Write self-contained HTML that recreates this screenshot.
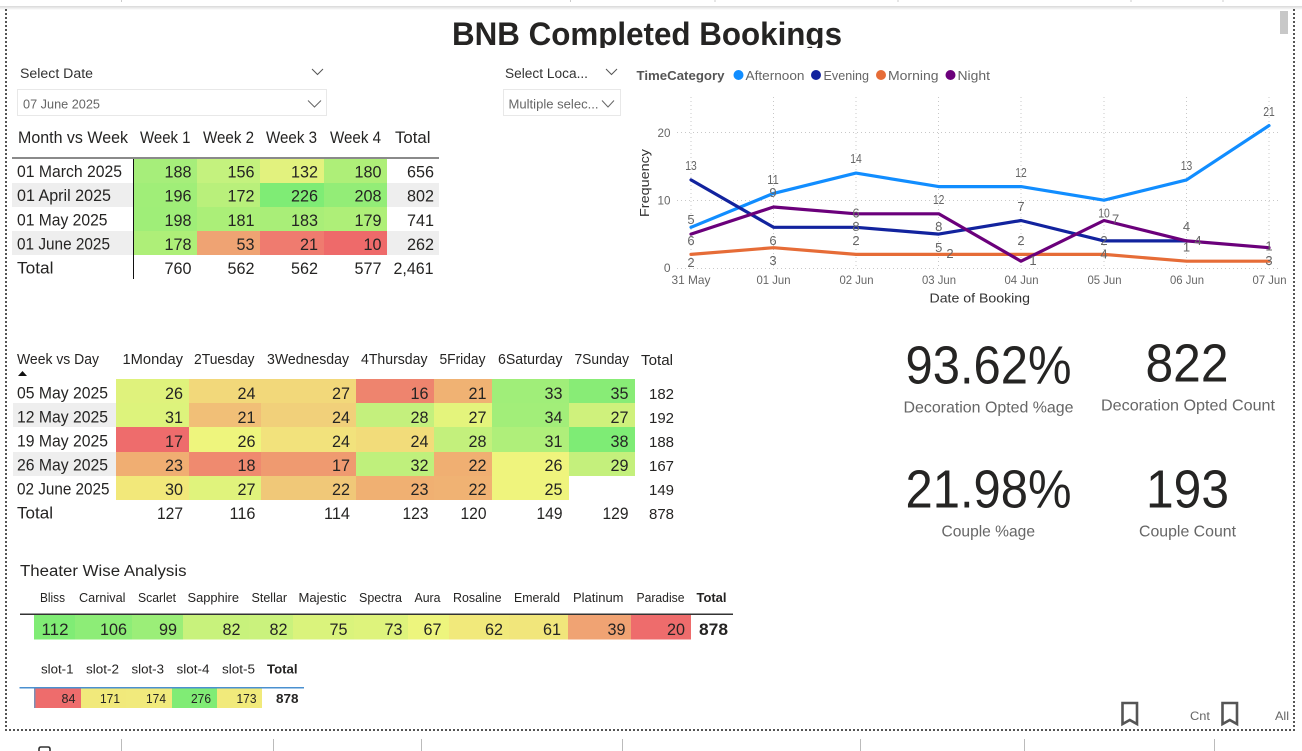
<!DOCTYPE html>
<html lang="en"><head><meta charset="utf-8"><title>BNB Completed Bookings</title>
<style>
html,body{margin:0;padding:0;width:1302px;height:751px;overflow:hidden;background:#fff}
svg{position:absolute;left:0;top:0;display:block}
text{font-family:"Liberation Sans",sans-serif;fill:#252423;white-space:pre}
.t1{font-size:17px}.t2{font-size:16.5px}.h2{font-size:15px}.h3{font-size:12.5px}.s{font-size:12.5px}
.r text{text-anchor:end}
.l text{font-size:13px;fill:#666;text-anchor:middle}
.a text{font-size:12px;fill:#666}
.kpi{font-size:54px}.cap{font-size:16px;fill:#666}
rect{shape-rendering:crispEdges}
</style></head><body>
<svg width="1302" height="751" viewBox="0 0 1302 751" xmlns="http://www.w3.org/2000/svg">
<defs><linearGradient id="sh" x1="0" y1="0" x2="0" y2="1"><stop offset="0" stop-color="#d8d8d8"/><stop offset="1" stop-color="#fff"/></linearGradient></defs>
<rect x="0" y="6" width="1302" height="4" fill="url(#sh)"/>
<g stroke="#ccc"><path d="M121.5 0V2M570.5 0V2M715 0V2M898 0V2M1131 0V2M1223 0V2"/></g>
<g stroke="#bbb"><path d="M121.5 739V751M273.5 739V751M421.5 739V751M622.5 739V751M860.5 739V751M1024.5 739V751M1214.5 739V751"/></g>
<path d="M6 9V730H1294V9" fill="none" stroke="#555" stroke-width="2" stroke-dasharray="2 2"/>
<rect x="1280" y="11" width="8" height="23" fill="#c8c8c8"/>
<path d="M39 751V749Q39 747 41 747H48Q50 747 50 749V751" fill="none" stroke="#333" stroke-width="1.6"/>

<text x="452" y="45" font-size="32" font-weight="700" textLength="390" lengthAdjust="spacingAndGlyphs">BNB Completed Bookings</text>
<rect x="440" y="48" width="420" height="6" fill="#fff"/>

<!-- slicers -->
<text x="20" y="78" font-size="13.5" fill="#444" textLength="73" lengthAdjust="spacingAndGlyphs" style="fill:#333">Select Date</text>
<path d="M312 69L317.5 74.5L323 69" fill="none" stroke="#555" stroke-width="1"/>
<rect x="17.5" y="89.5" width="309" height="26" fill="#fff" stroke="#e8e8e8"/>
<text x="23" y="108.5" font-size="12.5" textLength="77" lengthAdjust="spacingAndGlyphs" style="fill:#666">07 June 2025</text>
<path d="M308 100.5L314.5 107L321 100.5" fill="none" stroke="#666" stroke-width="1"/>
<text x="505" y="78" font-size="13.5" textLength="83" lengthAdjust="spacingAndGlyphs" style="fill:#333">Select Loca...</text>
<path d="M606 69L611.5 74.5L617 69" fill="none" stroke="#555" stroke-width="1"/>
<rect x="503.5" y="89.5" width="117" height="26" fill="#fff" stroke="#e8e8e8"/>
<text x="508.5" y="108.5" font-size="12.5" textLength="90" lengthAdjust="spacingAndGlyphs" style="fill:#666">Multiple selec...</text>
<path d="M602 100.5L608 107L614 100.5" fill="none" stroke="#666" stroke-width="1"/>

<!-- Table 1 -->
<g class="t1">
<text x="18" y="143" textLength="110" lengthAdjust="spacingAndGlyphs">Month vs Week</text>
<text x="140" y="143" textLength="50.5" lengthAdjust="spacingAndGlyphs">Week 1</text>
<text x="203" y="143" textLength="51" lengthAdjust="spacingAndGlyphs">Week 2</text>
<text x="266" y="143" textLength="51" lengthAdjust="spacingAndGlyphs">Week 3</text>
<text x="330" y="143" textLength="51" lengthAdjust="spacingAndGlyphs">Week 4</text>
<text x="395" y="143" textLength="35.5" lengthAdjust="spacingAndGlyphs">Total</text>
</g>
<rect x="12" y="183" width="427" height="24" fill="#eeeeee"/>
<rect x="12" y="231" width="427" height="24" fill="#eeeeee"/>
<g>
<rect x="134" y="158" width="63" height="25" fill="#A6EE7A"/><rect x="197" y="158" width="63" height="25" fill="#C4F27E"/><rect x="260" y="158" width="64" height="25" fill="#E2F27E"/><rect x="324" y="158" width="63" height="25" fill="#AEEF78"/>
<rect x="134" y="183" width="63" height="24" fill="#A0EE78"/><rect x="197" y="183" width="63" height="24" fill="#B9F07B"/><rect x="260" y="183" width="64" height="24" fill="#7FEC75"/><rect x="324" y="183" width="63" height="24" fill="#93ED77"/>
<rect x="134" y="207" width="63" height="24" fill="#9FEE78"/><rect x="197" y="207" width="63" height="24" fill="#ABEF78"/><rect x="260" y="207" width="64" height="24" fill="#A9EE78"/><rect x="324" y="207" width="63" height="24" fill="#AEEF78"/>
<rect x="134" y="231" width="63" height="24" fill="#AEEF78"/><rect x="197" y="231" width="63" height="24" fill="#EFA373"/><rect x="260" y="231" width="64" height="24" fill="#EF7B6F"/><rect x="324" y="231" width="63" height="24" fill="#EE6A6A"/>
</g>
<rect x="12" y="157" width="427" height="2" fill="#8a8a8a"/>
<rect x="133" y="159" width="1" height="120" fill="#111"/>
<g class="t1" transform="translate(0,-1)">
<text x="17" y="178" textLength="105" lengthAdjust="spacingAndGlyphs">01 March 2025</text>
<text x="17" y="202" textLength="94" lengthAdjust="spacingAndGlyphs">01 April 2025</text>
<text x="17" y="226.5" textLength="90.5" lengthAdjust="spacingAndGlyphs">01 May 2025</text>
<text x="17" y="250.5" textLength="93" lengthAdjust="spacingAndGlyphs">01 June 2025</text>
<text x="17" y="274.5" textLength="36.5" lengthAdjust="spacingAndGlyphs">Total</text>
</g>
<g class="t1 r" transform="translate(0,-0.5)">
<text x="191.5" y="178" textLength="27" lengthAdjust="spacingAndGlyphs">188</text><text x="254.5" y="178" textLength="27" lengthAdjust="spacingAndGlyphs">156</text><text x="318" y="178" textLength="27" lengthAdjust="spacingAndGlyphs">132</text><text x="381.5" y="178" textLength="27" lengthAdjust="spacingAndGlyphs">180</text><text x="434" y="178" textLength="27" lengthAdjust="spacingAndGlyphs">656</text>
<text x="191.5" y="202" textLength="27" lengthAdjust="spacingAndGlyphs">196</text><text x="254.5" y="202" textLength="27" lengthAdjust="spacingAndGlyphs">172</text><text x="318" y="202" textLength="27" lengthAdjust="spacingAndGlyphs">226</text><text x="381.5" y="202" textLength="27" lengthAdjust="spacingAndGlyphs">208</text><text x="434" y="202" textLength="27" lengthAdjust="spacingAndGlyphs">802</text>
<text x="191.5" y="226.5" textLength="27" lengthAdjust="spacingAndGlyphs">198</text><text x="254.5" y="226.5" textLength="27" lengthAdjust="spacingAndGlyphs">181</text><text x="318" y="226.5" textLength="27" lengthAdjust="spacingAndGlyphs">183</text><text x="381.5" y="226.5" textLength="27" lengthAdjust="spacingAndGlyphs">179</text><text x="434" y="226.5" textLength="27" lengthAdjust="spacingAndGlyphs">741</text>
<text x="191.5" y="250.5" textLength="27" lengthAdjust="spacingAndGlyphs">178</text><text x="254.5" y="250.5" textLength="18" lengthAdjust="spacingAndGlyphs">53</text><text x="318" y="250.5" textLength="18" lengthAdjust="spacingAndGlyphs">21</text><text x="381.5" y="250.5" textLength="18" lengthAdjust="spacingAndGlyphs">10</text><text x="434" y="250.5" textLength="27" lengthAdjust="spacingAndGlyphs">262</text>
<text x="191.5" y="274.5" textLength="27" lengthAdjust="spacingAndGlyphs">760</text><text x="254.5" y="274.5" textLength="27" lengthAdjust="spacingAndGlyphs">562</text><text x="318" y="274.5" textLength="27" lengthAdjust="spacingAndGlyphs">562</text><text x="381.5" y="274.5" textLength="27" lengthAdjust="spacingAndGlyphs">577</text><text x="433.5" y="274.5" textLength="40" lengthAdjust="spacingAndGlyphs">2,461</text>
</g>

<!-- Chart -->
<text x="636.5" y="80" font-size="12.5" font-weight="700" textLength="88" lengthAdjust="spacingAndGlyphs" style="fill:#555">TimeCategory</text>
<circle cx="738.5" cy="75" r="5" fill="#118DFF"/><text x="745.5" y="80" font-size="12.5" textLength="59" lengthAdjust="spacingAndGlyphs" style="fill:#666">Afternoon</text>
<circle cx="816" cy="75" r="5" fill="#12239E"/><text x="823.5" y="80" font-size="12.5" textLength="45.5" lengthAdjust="spacingAndGlyphs" style="fill:#666">Evening</text>
<circle cx="881" cy="75" r="5" fill="#E66C37"/><text x="888" y="80" font-size="12.5" textLength="50.5" lengthAdjust="spacingAndGlyphs" style="fill:#666">Morning</text>
<circle cx="950.5" cy="75" r="5" fill="#6B007B"/><text x="957.5" y="80" font-size="12.5" textLength="32.5" lengthAdjust="spacingAndGlyphs" style="fill:#666">Night</text>
<g stroke="#c8c8c8" stroke-width="1" stroke-dasharray="1 3" fill="none">
<path d="M677 132.5H1279M677 200.5H1279M677 268.5H1279"/>
<path d="M691 97V268M773.5 97V268M856 97V268M938.5 97V268M1021 97V268M1104 97V268M1186.5 97V268M1269 97V268"/>
</g>
<g fill="none" stroke-width="3.2" stroke-linejoin="round" stroke-linecap="round">
<polyline stroke="#118DFF" points="691,227.3 773.5,193.4 856,173.1 938.7,186.6 1021,186.6 1104,200.2 1186.5,179.9 1269,125.6"/>
<polyline stroke="#12239E" points="691,179.9 773.5,227.3 856,227.3 938.7,234.1 1021,220.5 1104,240.9 1186.5,240.9"/>
<polyline stroke="#E66C37" points="691,254.4 773.5,247.7 856,254.4 938.7,254.4 1021,254.4 1104,254.4 1186.5,261.2 1269,261.2"/>
<polyline stroke="#6B007B" points="691,234.1 773.5,207 856,213.8 938.7,213.8 1021,261.2 1104,220.5 1186.5,240.9 1269,247.7"/>
</g>
<g class="l">
<text x="691" y="170" textLength="11.5" lengthAdjust="spacingAndGlyphs">13</text><text x="773" y="184" textLength="11.5" lengthAdjust="spacingAndGlyphs">11</text><text x="856" y="163" textLength="11.5" lengthAdjust="spacingAndGlyphs">14</text><text x="938.7" y="204" textLength="11.5" lengthAdjust="spacingAndGlyphs">12</text><text x="1021" y="177" textLength="11.5" lengthAdjust="spacingAndGlyphs">12</text><text x="1104" y="217.6" textLength="11.5" lengthAdjust="spacingAndGlyphs">10</text><text x="1186.5" y="170" textLength="11.5" lengthAdjust="spacingAndGlyphs">13</text><text x="1269" y="116" textLength="11.5" lengthAdjust="spacingAndGlyphs">21</text>
<text x="691" y="224">5</text><text x="773" y="197">9</text><text x="856" y="217.6">6</text><text x="938.7" y="231">8</text><text x="1021" y="211">7</text><text x="1115.6" y="223.6">7</text><text x="1186.5" y="231">4</text><text x="1198" y="245">4</text>
<text x="691" y="245">6</text><text x="773" y="245">6</text><text x="856" y="231">8</text><text x="938.7" y="252">5</text><text x="1021" y="245">2</text><text x="1104" y="245">2</text><text x="1186.5" y="251.6">1</text><text x="1269" y="250.3">1</text>
<text x="691" y="267">2</text><text x="773" y="265">3</text><text x="856" y="245">2</text><text x="950" y="258">2</text><text x="1033" y="265">1</text><text x="1104" y="258.6">4</text><text x="1269" y="265">3</text>
</g>
<g class="a">
<text x="670.5" y="137" text-anchor="end" textLength="13" lengthAdjust="spacingAndGlyphs">20</text>
<text x="670.5" y="204.5" text-anchor="end" textLength="13" lengthAdjust="spacingAndGlyphs">10</text>
<text x="670.5" y="272" text-anchor="end">0</text>
<text x="671.5" y="284" textLength="39" lengthAdjust="spacingAndGlyphs">31 May</text>
<text x="756.5" y="284" textLength="34" lengthAdjust="spacingAndGlyphs">01 Jun</text>
<text x="839.5" y="284" textLength="34" lengthAdjust="spacingAndGlyphs">02 Jun</text>
<text x="922" y="284" textLength="34" lengthAdjust="spacingAndGlyphs">03 Jun</text>
<text x="1004.5" y="284" textLength="34" lengthAdjust="spacingAndGlyphs">04 Jun</text>
<text x="1087.5" y="284" textLength="34" lengthAdjust="spacingAndGlyphs">05 Jun</text>
<text x="1170" y="284" textLength="34" lengthAdjust="spacingAndGlyphs">06 Jun</text>
<text x="1252.5" y="284" textLength="34" lengthAdjust="spacingAndGlyphs">07 Jun</text>
</g>
<text x="929.5" y="302.5" font-size="12.5" textLength="100.5" lengthAdjust="spacingAndGlyphs" style="fill:#333">Date of Booking</text>
<text transform="translate(649,217) rotate(-90)" font-size="12.5" textLength="68" lengthAdjust="spacingAndGlyphs" style="fill:#333">Frequency</text>

<!-- Table 2 -->
<g class="h2">
<text x="17" y="364" textLength="82" lengthAdjust="spacingAndGlyphs">Week vs Day</text>
<text x="122.5" y="364" textLength="60.5" lengthAdjust="spacingAndGlyphs">1Monday</text>
<text x="194" y="364" textLength="60.5" lengthAdjust="spacingAndGlyphs">2Tuesday</text>
<text x="267" y="364" textLength="82" lengthAdjust="spacingAndGlyphs">3Wednesday</text>
<text x="361" y="364" textLength="66.5" lengthAdjust="spacingAndGlyphs">4Thursday</text>
<text x="439.5" y="364" textLength="46" lengthAdjust="spacingAndGlyphs">5Friday</text>
<text x="498" y="364" textLength="64.5" lengthAdjust="spacingAndGlyphs">6Saturday</text>
<text x="574.5" y="364" textLength="54.5" lengthAdjust="spacingAndGlyphs">7Sunday</text>
<text x="641" y="365" textLength="32" lengthAdjust="spacingAndGlyphs">Total</text>
</g>
<path d="M18 376L22.5 371L27 376Z" fill="#111"/>
<rect x="13" y="403" width="104" height="24" fill="#eeeeee"/>
<rect x="13" y="452" width="104" height="24" fill="#eeeeee"/>
<g>
<rect x="116" y="379" width="73" height="24" fill="#DFF27C"/><rect x="189" y="379" width="167" height="24" fill="#F2D87A"/><rect x="356" y="379" width="78" height="24" fill="#EE846E"/><rect x="434" y="379" width="58" height="24" fill="#F0B273"/><rect x="492" y="379" width="77" height="24" fill="#A0EE79"/><rect x="569" y="379" width="66" height="24" fill="#88EC76"/>
<rect x="116" y="403" width="73" height="24" fill="#DDF37C"/><rect x="189" y="403" width="72" height="24" fill="#F1BF77"/><rect x="261" y="403" width="95" height="24" fill="#F1D07A"/><rect x="356" y="403" width="78" height="24" fill="#C4F07D"/><rect x="434" y="403" width="58" height="24" fill="#E4F47C"/><rect x="492" y="403" width="77" height="24" fill="#A2EE79"/><rect x="569" y="403" width="66" height="24" fill="#CFF17C"/>
<rect x="116" y="427" width="73" height="25" fill="#EE6C6C"/><rect x="189" y="427" width="72" height="25" fill="#EEF57D"/><rect x="261" y="427" width="95" height="25" fill="#F2E27C"/><rect x="356" y="427" width="78" height="25" fill="#F2DC7A"/><rect x="434" y="427" width="58" height="25" fill="#C3F07C"/><rect x="492" y="427" width="77" height="25" fill="#AFEF7A"/><rect x="569" y="427" width="66" height="25" fill="#7EEC75"/>
<rect x="116" y="452" width="73" height="24" fill="#F0AE72"/><rect x="189" y="452" width="72" height="24" fill="#EF8A6F"/><rect x="261" y="452" width="95" height="24" fill="#EF9A70"/><rect x="356" y="452" width="78" height="24" fill="#BFF07C"/><rect x="434" y="452" width="58" height="24" fill="#F0AF72"/><rect x="492" y="452" width="77" height="24" fill="#EFF47D"/><rect x="569" y="452" width="66" height="24" fill="#C4F07C"/>
<rect x="116" y="476" width="73" height="24" fill="#F2E87A"/><rect x="189" y="476" width="72" height="24" fill="#E0F37C"/><rect x="261" y="476" width="95" height="24" fill="#F0C878"/><rect x="356" y="476" width="78" height="24" fill="#F0B072"/><rect x="434" y="476" width="58" height="24" fill="#F0B273"/><rect x="492" y="476" width="77" height="24" fill="#EFF47D"/>
</g>
<g class="t2" transform="translate(0,-0.7)">
<text x="17" y="399" textLength="91" lengthAdjust="spacingAndGlyphs">05 May 2025</text>
<text x="17" y="423" textLength="91" lengthAdjust="spacingAndGlyphs">12 May 2025</text>
<text x="17" y="447" textLength="91" lengthAdjust="spacingAndGlyphs">19 May 2025</text>
<text x="17" y="471" textLength="91" lengthAdjust="spacingAndGlyphs">26 May 2025</text>
<text x="17" y="495" textLength="92.5" lengthAdjust="spacingAndGlyphs">02 June 2025</text>
<text x="17" y="519" textLength="36" lengthAdjust="spacingAndGlyphs">Total</text>
</g>
<g class="t2 r">
<text x="183" y="399" textLength="18" lengthAdjust="spacingAndGlyphs">26</text><text x="255.5" y="399" textLength="18" lengthAdjust="spacingAndGlyphs">24</text><text x="350" y="399" textLength="18" lengthAdjust="spacingAndGlyphs">27</text><text x="428.5" y="399" textLength="18" lengthAdjust="spacingAndGlyphs">16</text><text x="486.5" y="399" textLength="18" lengthAdjust="spacingAndGlyphs">21</text><text x="562.5" y="399" textLength="18" lengthAdjust="spacingAndGlyphs">33</text><text x="628.5" y="399" textLength="18" lengthAdjust="spacingAndGlyphs">35</text><text x="674" y="399" font-size="15" textLength="25" lengthAdjust="spacingAndGlyphs">182</text>
<text x="183" y="423" textLength="18" lengthAdjust="spacingAndGlyphs">31</text><text x="255.5" y="423" textLength="18" lengthAdjust="spacingAndGlyphs">21</text><text x="350" y="423" textLength="18" lengthAdjust="spacingAndGlyphs">24</text><text x="428.5" y="423" textLength="18" lengthAdjust="spacingAndGlyphs">28</text><text x="486.5" y="423" textLength="18" lengthAdjust="spacingAndGlyphs">27</text><text x="562.5" y="423" textLength="18" lengthAdjust="spacingAndGlyphs">34</text><text x="628.5" y="423" textLength="18" lengthAdjust="spacingAndGlyphs">27</text><text x="674" y="423" font-size="15" textLength="25" lengthAdjust="spacingAndGlyphs">192</text>
<text x="183" y="447" textLength="18" lengthAdjust="spacingAndGlyphs">17</text><text x="255.5" y="447" textLength="18" lengthAdjust="spacingAndGlyphs">26</text><text x="350" y="447" textLength="18" lengthAdjust="spacingAndGlyphs">24</text><text x="428.5" y="447" textLength="18" lengthAdjust="spacingAndGlyphs">24</text><text x="486.5" y="447" textLength="18" lengthAdjust="spacingAndGlyphs">28</text><text x="562.5" y="447" textLength="18" lengthAdjust="spacingAndGlyphs">31</text><text x="628.5" y="447" textLength="18" lengthAdjust="spacingAndGlyphs">38</text><text x="674" y="447" font-size="15" textLength="25" lengthAdjust="spacingAndGlyphs">188</text>
<text x="183" y="471" textLength="18" lengthAdjust="spacingAndGlyphs">23</text><text x="255.5" y="471" textLength="18" lengthAdjust="spacingAndGlyphs">18</text><text x="350" y="471" textLength="18" lengthAdjust="spacingAndGlyphs">17</text><text x="428.5" y="471" textLength="18" lengthAdjust="spacingAndGlyphs">32</text><text x="486.5" y="471" textLength="18" lengthAdjust="spacingAndGlyphs">22</text><text x="562.5" y="471" textLength="18" lengthAdjust="spacingAndGlyphs">26</text><text x="628.5" y="471" textLength="18" lengthAdjust="spacingAndGlyphs">29</text><text x="674" y="471" font-size="15" textLength="25" lengthAdjust="spacingAndGlyphs">167</text>
<text x="183" y="495" textLength="18" lengthAdjust="spacingAndGlyphs">30</text><text x="255.5" y="495" textLength="18" lengthAdjust="spacingAndGlyphs">27</text><text x="350" y="495" textLength="18" lengthAdjust="spacingAndGlyphs">22</text><text x="428.5" y="495" textLength="18" lengthAdjust="spacingAndGlyphs">23</text><text x="486.5" y="495" textLength="18" lengthAdjust="spacingAndGlyphs">22</text><text x="562.5" y="495" textLength="18" lengthAdjust="spacingAndGlyphs">25</text><text x="674" y="495" font-size="15" textLength="25" lengthAdjust="spacingAndGlyphs">149</text>
<text x="183" y="519" textLength="26" lengthAdjust="spacingAndGlyphs">127</text><text x="255.5" y="519" textLength="26" lengthAdjust="spacingAndGlyphs">116</text><text x="350" y="519" textLength="26" lengthAdjust="spacingAndGlyphs">114</text><text x="428.5" y="519" textLength="26" lengthAdjust="spacingAndGlyphs">123</text><text x="486.5" y="519" textLength="26" lengthAdjust="spacingAndGlyphs">120</text><text x="562.5" y="519" textLength="26" lengthAdjust="spacingAndGlyphs">149</text><text x="628.5" y="519" textLength="26" lengthAdjust="spacingAndGlyphs">129</text><text x="674" y="519" font-size="15" textLength="25" lengthAdjust="spacingAndGlyphs">878</text>
</g>

<!-- Table 3 -->
<text x="20" y="576" font-size="15.5" textLength="166.5" lengthAdjust="spacingAndGlyphs">Theater Wise Analysis</text>
<g class="h3">
<text x="40" y="602" textLength="25" lengthAdjust="spacingAndGlyphs">Bliss</text>
<text x="79" y="602" textLength="46.5" lengthAdjust="spacingAndGlyphs">Carnival</text>
<text x="138" y="602" textLength="38" lengthAdjust="spacingAndGlyphs">Scarlet</text>
<text x="187.5" y="602" textLength="51.5" lengthAdjust="spacingAndGlyphs">Sapphire</text>
<text x="251.5" y="602" textLength="35.5" lengthAdjust="spacingAndGlyphs">Stellar</text>
<text x="298.5" y="602" textLength="48" lengthAdjust="spacingAndGlyphs">Majestic</text>
<text x="359" y="602" textLength="43" lengthAdjust="spacingAndGlyphs">Spectra</text>
<text x="414.5" y="602" textLength="26" lengthAdjust="spacingAndGlyphs">Aura</text>
<text x="453" y="602" textLength="48.5" lengthAdjust="spacingAndGlyphs">Rosaline</text>
<text x="514" y="602" textLength="46" lengthAdjust="spacingAndGlyphs">Emerald</text>
<text x="573" y="602" textLength="50.5" lengthAdjust="spacingAndGlyphs">Platinum</text>
<text x="636.5" y="602" textLength="48" lengthAdjust="spacingAndGlyphs">Paradise</text>
<text x="696.5" y="602" font-weight="700" textLength="30" lengthAdjust="spacingAndGlyphs">Total</text>
</g>
<g>
<rect x="34" y="615" width="41" height="24.5" fill="#80EC75"/><rect x="75" y="615" width="57" height="24.5" fill="#8DED77"/><rect x="132" y="615" width="51" height="24.5" fill="#9BEE78"/><rect x="183" y="615" width="66" height="24.5" fill="#C8F27C"/><rect x="249" y="615" width="44" height="24.5" fill="#CAF27D"/><rect x="293" y="615" width="61" height="24.5" fill="#DAF37C"/><rect x="354" y="615" width="54" height="24.5" fill="#DEF37C"/><rect x="408" y="615" width="41" height="24.5" fill="#EDF57D"/><rect x="449" y="615" width="60" height="24.5" fill="#F1E97B"/><rect x="509" y="615" width="59" height="24.5" fill="#F1E67B"/><rect x="568" y="615" width="63" height="24.5" fill="#F0A373"/><rect x="631" y="615" width="60" height="24.5" fill="#EE6C6C"/>
</g>
<rect x="20" y="613.5" width="713" height="1.3" fill="#333"/>
<g class="t2 r">
<text x="68.5" y="635" textLength="27" lengthAdjust="spacingAndGlyphs">112</text><text x="127" y="635" textLength="27" lengthAdjust="spacingAndGlyphs">106</text><text x="177" y="635" textLength="18" lengthAdjust="spacingAndGlyphs">99</text><text x="240.5" y="635" textLength="18" lengthAdjust="spacingAndGlyphs">82</text><text x="287.5" y="635" textLength="18" lengthAdjust="spacingAndGlyphs">82</text><text x="347.5" y="635" textLength="18" lengthAdjust="spacingAndGlyphs">75</text><text x="402.5" y="635" textLength="18" lengthAdjust="spacingAndGlyphs">73</text><text x="441.5" y="635" textLength="18" lengthAdjust="spacingAndGlyphs">67</text><text x="503" y="635" textLength="18" lengthAdjust="spacingAndGlyphs">62</text><text x="561" y="635" textLength="18" lengthAdjust="spacingAndGlyphs">61</text><text x="625.5" y="635" textLength="18" lengthAdjust="spacingAndGlyphs">39</text><text x="685" y="635" textLength="18" lengthAdjust="spacingAndGlyphs">20</text>
<text x="728" y="635" font-weight="700" textLength="29" lengthAdjust="spacingAndGlyphs">878</text>
</g>

<!-- Slot table -->
<g class="h3">
<text x="41" y="673.5" textLength="32.5" lengthAdjust="spacingAndGlyphs">slot-1</text>
<text x="86" y="673.5" textLength="33" lengthAdjust="spacingAndGlyphs">slot-2</text>
<text x="131.5" y="673.5" textLength="32.5" lengthAdjust="spacingAndGlyphs">slot-3</text>
<text x="176.5" y="673.5" textLength="33" lengthAdjust="spacingAndGlyphs">slot-4</text>
<text x="222" y="673.5" textLength="33" lengthAdjust="spacingAndGlyphs">slot-5</text>
<text x="267" y="673.5" font-weight="700" textLength="30.5" lengthAdjust="spacingAndGlyphs">Total</text>
</g>
<rect x="34" y="688" width="47" height="20" fill="#EE6C6C"/><rect x="81" y="688" width="45" height="20" fill="#F1E97B"/><rect x="126" y="688" width="46" height="20" fill="#F1EA7C"/><rect x="172" y="688" width="45" height="20" fill="#80EC75"/><rect x="217" y="688" width="45" height="20" fill="#F1EA7B"/>
<rect x="34" y="688" width="1.5" height="20" fill="#7c8fb5"/>
<rect x="19.5" y="687" width="284.5" height="1.3" fill="#4a90d0"/>
<g class="s r">
<text x="75.5" y="703" textLength="14" lengthAdjust="spacingAndGlyphs">84</text><text x="120" y="703" textLength="20" lengthAdjust="spacingAndGlyphs">171</text><text x="166" y="703" textLength="20" lengthAdjust="spacingAndGlyphs">174</text><text x="211" y="703" textLength="20" lengthAdjust="spacingAndGlyphs">276</text><text x="256.5" y="703" textLength="20" lengthAdjust="spacingAndGlyphs">173</text>
<text x="298.5" y="703" font-weight="700" textLength="22.5" lengthAdjust="spacingAndGlyphs">878</text>
</g>

<!-- KPIs -->
<text class="kpi" x="905.5" y="383.5" textLength="166" lengthAdjust="spacingAndGlyphs">93.62%</text>
<text class="kpi" x="1145.5" y="381.5" textLength="83" lengthAdjust="spacingAndGlyphs">822</text>
<text class="cap" x="903.5" y="412.5" textLength="170" lengthAdjust="spacingAndGlyphs" style="fill:#666">Decoration Opted %age</text>
<text class="cap" x="1101" y="410.5" textLength="174" lengthAdjust="spacingAndGlyphs" style="fill:#666">Decoration Opted Count</text>
<text class="kpi" x="905.5" y="507.5" textLength="166" lengthAdjust="spacingAndGlyphs">21.98%</text>
<text class="kpi" x="1146" y="507.5" textLength="83" lengthAdjust="spacingAndGlyphs">193</text>
<text class="cap" x="941.5" y="536.5" textLength="93.5" lengthAdjust="spacingAndGlyphs" style="fill:#666">Couple %age</text>
<text class="cap" x="1139" y="536.5" textLength="97" lengthAdjust="spacingAndGlyphs" style="fill:#666">Couple Count</text>

<!-- bookmarks -->
<path d="M1122.5 703H1137V724L1129.8 720L1122.5 724Z" fill="none" stroke="#555" stroke-width="2.6"/>
<path d="M1222.5 703H1237V724L1229.8 720L1222.5 724Z" fill="none" stroke="#555" stroke-width="2.6"/>
<text x="1190" y="720" font-size="12" textLength="20" lengthAdjust="spacingAndGlyphs" style="fill:#666">Cnt</text>
<text x="1275" y="720" font-size="12" textLength="14" lengthAdjust="spacingAndGlyphs" style="fill:#666">All</text>
</svg>
</body></html>
